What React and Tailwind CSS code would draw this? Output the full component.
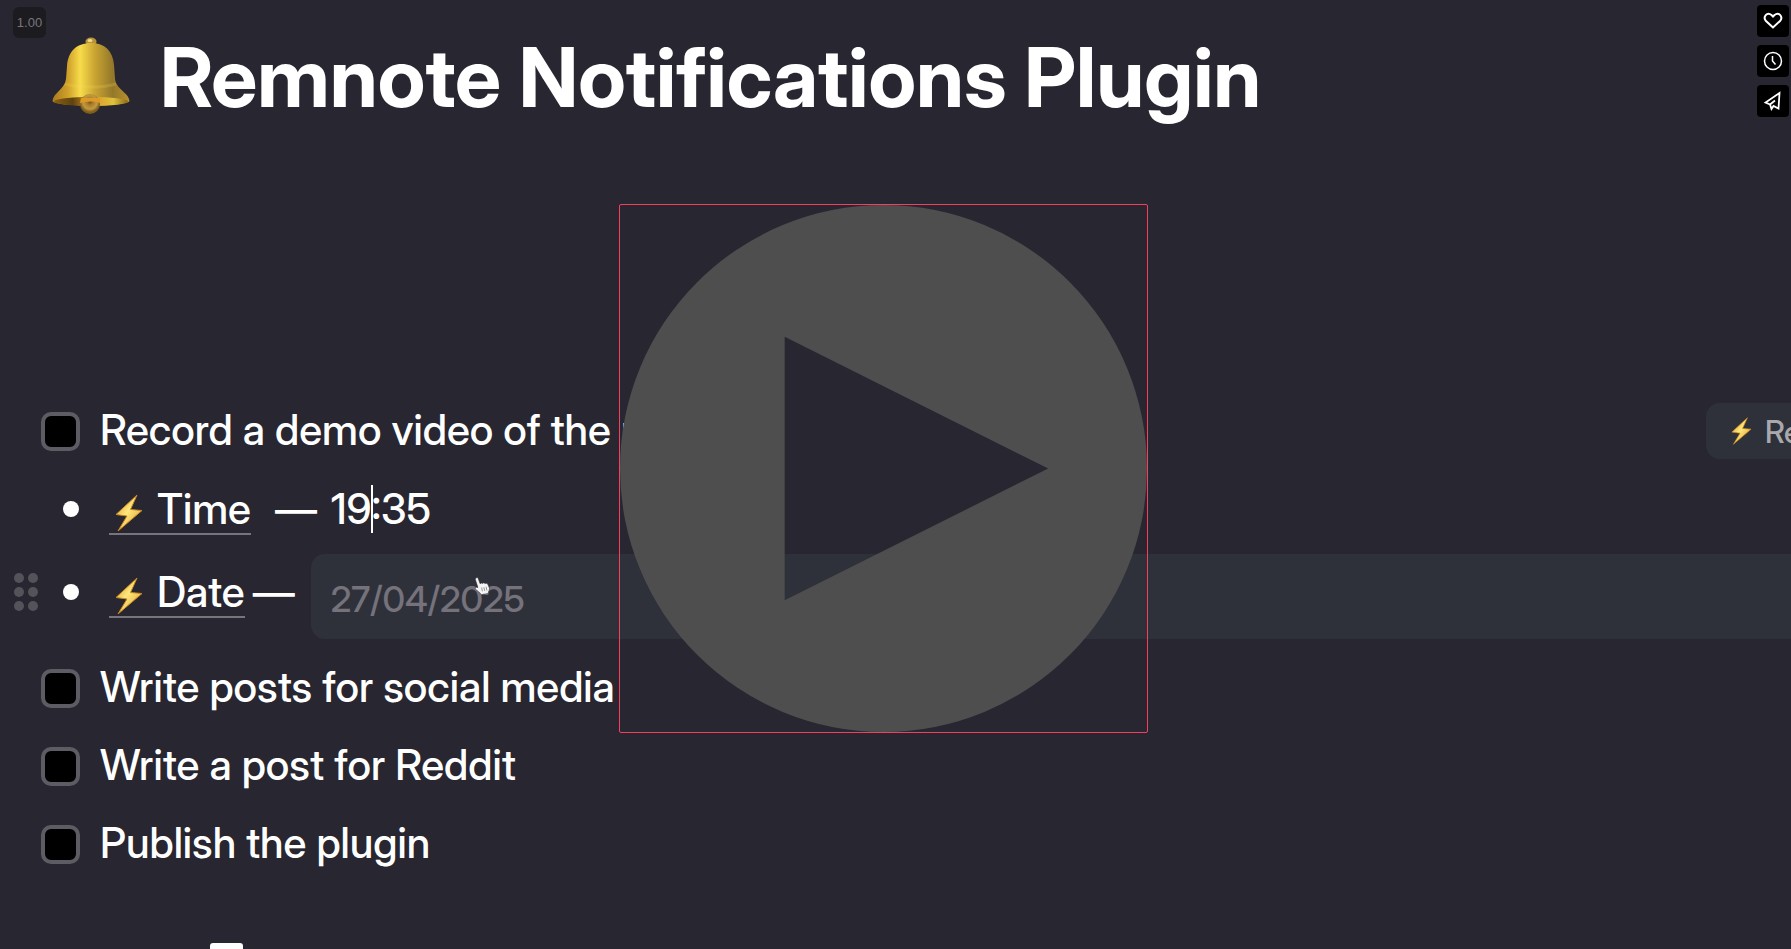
import { useId } from "react";

function Bolt({ className }) {
  const id = useId();
  return (
    <svg viewBox="0 0 28 38" className={className} aria-hidden="true">
      <defs>
        <linearGradient id={id} x1="0" y1="0" x2="1" y2="1">
          <stop offset="0" stopColor="#c98a1c" />
          <stop offset="0.45" stopColor="#ffe77d" />
          <stop offset="1" stopColor="#d4921d" />
        </linearGradient>
      </defs>
      <path
        d="M22 1 L1 20.5 L12 22 L3 37 L27 16.5 L15.5 15.5 Z"
        fill={`url(#${id})`}
        stroke="#c9871d"
        strokeWidth="1"
        strokeLinejoin="round"
      />
    </svg>
  );
}

function Bell() {
  return (
    <svg viewBox="0 0 78 78" className="mb-1 size-[78px] shrink-0" aria-hidden="true">
      <defs>
        <linearGradient id="bell-body" x1="0" x2="1">
          <stop offset="0" stopColor="#a87a1e" />
          <stop offset="0.2" stopColor="#cfa02a" />
          <stop offset="0.36" stopColor="#f8dc4a" />
          <stop offset="0.55" stopColor="#c9a432" />
          <stop offset="0.78" stopColor="#94782a" />
          <stop offset="1" stopColor="#b8902c" />
        </linearGradient>
        <linearGradient id="bell-rim" x1="0" x2="1">
          <stop offset="0" stopColor="#8a5f14" />
          <stop offset="0.25" stopColor="#5e430f" />
          <stop offset="0.5" stopColor="#dc9423" />
          <stop offset="0.8" stopColor="#e0c23c" />
          <stop offset="1" stopColor="#8a6818" />
        </linearGradient>
        <radialGradient id="bell-ball" cx="0.5" cy="0.4">
          <stop offset="0" stopColor="#7a5220" />
          <stop offset="0.3" stopColor="#a97c28" />
          <stop offset="0.7" stopColor="#c29a3f" />
          <stop offset="1" stopColor="#7d5f1c" />
        </radialGradient>
      </defs>
      <ellipse cx="39" cy="4.5" rx="5.5" ry="4" fill="#b9923a" />
      <ellipse cx="38" cy="3.5" rx="2.5" ry="1.5" fill="#f0dc90" />
      <path
        d="M39 6 C24 6 16 15 15 29 L14 42 C13 52 1 56 0.5 64 C1 70 77 70 77.5 64 C77 56 64 52 63 42 L62 28 C61 14 53 6 39 6 Z"
        fill="url(#bell-body)"
      />
      <path d="M13 47 C26 51 52 51 64 47" fill="none" stroke="#f6da58" strokeOpacity="0.2" strokeWidth="3" />
      <ellipse cx="39" cy="64.5" rx="37" ry="4.5" fill="url(#bell-rim)" />
      <circle cx="38" cy="67" r="10" fill="url(#bell-ball)" />
      <path d="M29 61 H48 V66 C42 64 35 64 28 66 Z" fill="#dc9a28" />
    </svg>
  );
}

function TaskRow({ id, children, tag }) {
  return (
    <li className="flex h-[78px] items-center pl-[41px]">
      <input
        id={id}
        type="checkbox"
        className="size-[39px] shrink-0 appearance-none rounded-[10px] border-4 border-[#5d5b63] bg-black"
      />
      <label htmlFor={id} className="mb-[2px] ml-5 whitespace-nowrap">
        {children}
      </label>
      {tag}
    </li>
  );
}

function Property({ name }) {
  return (
    <a
      href="#property"
      className="ml-[30px] flex h-[52px] shrink-0 items-center border-b-2 border-[#77757c] pt-[2px] pl-[6px]"
    >
      <Bolt className="mt-2 h-[38px] w-7" />
      <span className="ml-[14px]">{name}</span>
    </a>
  );
}

const Bullet = () => <span className="size-4 shrink-0 rounded-full bg-white" />;

const playerButton =
  "flex size-8 items-center justify-center rounded-[4px] bg-black text-white";

export default function App() {
  return (
    <main className="relative flex min-h-screen flex-col overflow-hidden bg-[#282630] font-['Inter_Display','Inter',sans-serif] text-[42px] leading-none font-medium text-white">
      <header className="flex h-[156px] items-center pl-[52px]">
        <Bell />
        <h1 className="ml-[30px] text-[82px] font-bold whitespace-nowrap">Remnote Notifications Plugin</h1>
      </header>

      <ul className="mt-[236px]">
        <TaskRow
          id="record"
          tag={
            <span className="absolute right-0 flex h-14 w-[85px] items-center overflow-hidden rounded-l-[14px] bg-[#2e313a] pl-[25px] text-[31px] text-[#a9a8ad]">
              <Bolt className="h-7 w-[21px] shrink-0" />
              <span className="ml-[13px]">Re</span>
            </span>
          }
        >
          Record a demo video of the plugin
        </TaskRow>

        <li className="flex h-[78px] items-center pl-[63px]">
          <Bullet />
          <Property name="Time" />
          <span className="ml-6">—</span>
          <span className="ml-[14px] flex items-center">
            19
            <span className="-mx-px h-12 w-[2px] bg-white" />
            :35
          </span>
        </li>

        <li className="flex h-[101px] items-start pt-[6px]">
          <div className="flex h-[76px] shrink-0 items-center pl-[14px]">
            <span className="grid grid-cols-2 gap-1" aria-hidden="true">
              {[0, 1, 2, 3, 4, 5].map((dot) => (
                <span key={dot} className="size-[10px] rounded-full bg-[#55535a]" />
              ))}
            </span>
            <span className="ml-[25px] flex">
              <Bullet />
            </span>
            <Property name="Date" />
            <span className="ml-2">—</span>
          </div>
          <input
            aria-label="Date"
            placeholder="27/04/2025"
            className="ml-4 h-[85px] min-w-0 flex-1 rounded-l-[14px] bg-[#2e313a] pt-1 pl-5 text-[36px] placeholder:text-[#75727c]"
          />
        </li>

        <TaskRow id="social">Write posts for social media</TaskRow>
        <TaskRow id="reddit">Write a post for Reddit</TaskRow>
        <TaskRow id="publish">Publish the plugin</TaskRow>
      </ul>

      <svg viewBox="0 0 24 24" className="absolute top-[577px] left-[473px] size-[18px]" aria-hidden="true">
        <path
          d="M4 1 Q6 0 7 2 L9.5 9 Q11 7 12.5 8.5 Q14.5 7 16 8.5 Q18.5 7.5 20 10 L22 15 Q22 18 20.5 20 L20.5 22 L11 23.5 L9.5 21.5 L3 16 Q2 13 6.5 14 L3 3 Z"
          fill="#f4f4f4"
          stroke="#2a2a2e"
          strokeWidth="0.8"
        />
        <path d="M11.5 14 L12.5 19 M14.5 13.5 L15.5 18.5 M17.5 13 L18.5 18" stroke="#77757c" strokeWidth="1" />
      </svg>

      <span className="absolute top-[7px] left-[13px] flex h-[31px] w-[33px] items-center justify-center rounded-[6px] bg-[#1c1b20] font-['Liberation_Sans',sans-serif] text-[13px] font-normal text-[#77767b]">
        1.00
      </span>

      <button
        type="button"
        aria-label="Play"
        className="absolute top-[204px] left-[619px] size-[529px] rounded-[2px] border border-[#f43f5e]"
      >
        <svg viewBox="0 0 20 20" className="size-full" aria-hidden="true">
          <path
            fillRule="evenodd"
            fill="#4e4e4f"
            d="M10 0 A10 10 0 1 0 10 20 A10 10 0 1 0 10 0 Z M6.25 5 L16.25 10 L6.25 15 Z"
          />
        </svg>
      </button>

      <nav className="absolute top-[5px] right-[2px] flex flex-col gap-2" aria-label="Video actions">
        <button type="button" aria-label="Like" className={playerButton}>
          <svg viewBox="0 0 20 20" className="size-5" fill="none" stroke="currentColor" strokeWidth="2">
            <path d="M10 16.5 L3 10 C-0.5 6 4 0.5 8.5 4 L10 5.5 L11.5 4 C16 0.5 20.5 6 17 10 Z" />
          </svg>
        </button>
        <button type="button" aria-label="Watch later" className={playerButton}>
          <svg viewBox="0 0 20 20" className="size-5" fill="none" stroke="currentColor" strokeWidth="1.5">
            <circle cx="10" cy="10" r="8.5" />
            <path d="M9.5 5 V10 L12.5 13.5" />
          </svg>
        </button>
        <button type="button" aria-label="Share" className={playerButton}>
          <svg viewBox="0 0 20 20" className="size-5" fill="none" stroke="currentColor" strokeWidth="1.8">
            <path d="M16.5 2 L2.5 11.5 L7 13.5 L8.5 18 L10.5 15 L15.5 17.5 Z M7 13.5 L12 9.5" />
          </svg>
        </button>
      </nav>

      <span className="absolute bottom-0 left-[210px] h-[6px] w-[33px] rounded-t-[3px] bg-white" />
    </main>
  );
}
